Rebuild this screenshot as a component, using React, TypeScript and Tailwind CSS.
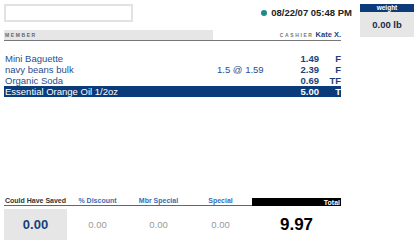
import React from "react";

const items = [
  { name: "Mini Baguette", qty: "", price: "1.49", flag: "F" },
  { name: "navy beans bulk", qty: "1.5 @ 1.59", price: "2.39", flag: "F" },
  { name: "Organic Soda", qty: "", price: "0.69", flag: "TF" },
  { name: "Essential Orange Oil 1/2oz", qty: "", price: "5.00", flag: "T", sel: true },
];

export default function App() {
  return (
    <div
      className="w-[420px] h-[252px] bg-white flex pl-[4px] pt-[4px] pb-[12px] overflow-hidden"
      style={{ fontFamily: '"Liberation Sans", Arial, sans-serif' }}
    >
      <div className="w-[348px] flex flex-col">
        <div className="flex items-center h-[18px]">
          <div className="w-[129px] h-[18px] border-2 border-[#e2e2e2] bg-white" />
          <div className="ml-auto flex items-center">
            <div className="w-[6px] h-[6px] rounded-full bg-[#1b8c8a] mr-[4px]" />
            <span className="text-[9.5px] font-bold text-[#222] leading-none">08/22/07 05:48 PM</span>
          </div>
        </div>
        <div className="mt-[8px] w-[337px] h-[11px] flex border-b border-[#777]">
          <div className="w-[209px] bg-[#e6e6e6] flex items-center">
            <span className="text-[5px] font-bold tracking-[1.6px] text-[#666] leading-none ml-[1px]">MEMBER</span>
          </div>
          <div className="flex-1 flex items-center justify-end">
            <span className="text-[5px] font-bold tracking-[1.6px] text-[#777] leading-none mr-[2px]">CASHIER</span>
            <span className="text-[7.5px] font-bold text-[#1c3f7c] leading-none">Kate X.</span>
          </div>
        </div>
        <div className="mt-[12px] w-[337px] flex flex-col">
          {items.map((it) => (
            <div
              key={it.name}
              className={
                "flex items-center h-[11px] text-[9.5px] leading-none " +
                (it.sel ? "bg-[#0c3b7a] text-white" : "text-[#1f4e8f]")
              }
            >
              <div className="w-[213px] pl-[1px] whitespace-nowrap">{it.name}</div>
              <div className="w-[59px] whitespace-nowrap">{it.qty}</div>
              <div className={"w-[43px] text-right font-bold " + (it.sel ? "text-white" : "text-[#1c3f7c]")}>{it.price}</div>
              <div className={"w-[22px] text-right font-bold " + (it.sel ? "text-white" : "text-[#1c3f7c]")}>{it.flag}</div>
            </div>
          ))}
        </div>
        <div className="mt-auto w-[337px] flex flex-col">
          <div className="flex items-end h-[8px]">
            <div className="w-[248px] flex items-end border-b border-[#666] h-[8px]">
              <div className="w-[63px] text-center text-[7px] font-bold text-[#333] leading-none pb-[1px]">Could Have Saved</div>
              <div className="w-[61px] text-center text-[7px] font-bold text-[#3b6bb5] leading-none pb-[1px]">% Discount</div>
              <div className="w-[61px] text-center text-[7px] font-bold text-[#3b6bb5] leading-none pb-[1px]">Mbr Special</div>
              <div className="w-[63px] text-center text-[7px] font-bold text-[#3b6bb5] leading-none pb-[1px]">Special</div>
            </div>
            <div className="w-[89px] h-[8px] bg-black flex items-center justify-end pr-[1px]">
              <span className="text-[7px] font-bold text-white leading-none">Total</span>
            </div>
          </div>
          <div className="flex mt-[3px] h-[31px] items-center">
            <div className="w-[63px] h-[31px] bg-[#e6e6e6] flex items-center justify-center">
              <span className="text-[13px] font-bold text-[#163f7a] leading-none">0.00</span>
            </div>
            <div className="w-[61px] text-center text-[9.5px] text-[#9a9a9a] leading-none">0.00</div>
            <div className="w-[61px] text-center text-[9.5px] text-[#9a9a9a] leading-none">0.00</div>
            <div className="w-[63px] text-center text-[9.5px] text-[#9a9a9a] leading-none">0.00</div>
            <div className="w-[89px] text-center text-[17px] font-bold text-black leading-none">9.97</div>
          </div>
        </div>
      </div>
      <div className="ml-[8px] w-[54px] h-[33px] flex flex-col">
        <div className="h-[8px] bg-[#0c3b7a] flex items-center justify-center">
          <span className="text-[6.5px] font-bold text-white leading-none">weight</span>
        </div>
        <div className="flex-1 bg-[#e6e6e6] flex items-center justify-center">
          <span className="text-[9.5px] font-bold text-[#1a2a44] leading-none">0.00 lb</span>
        </div>
      </div>
    </div>
  );
}
